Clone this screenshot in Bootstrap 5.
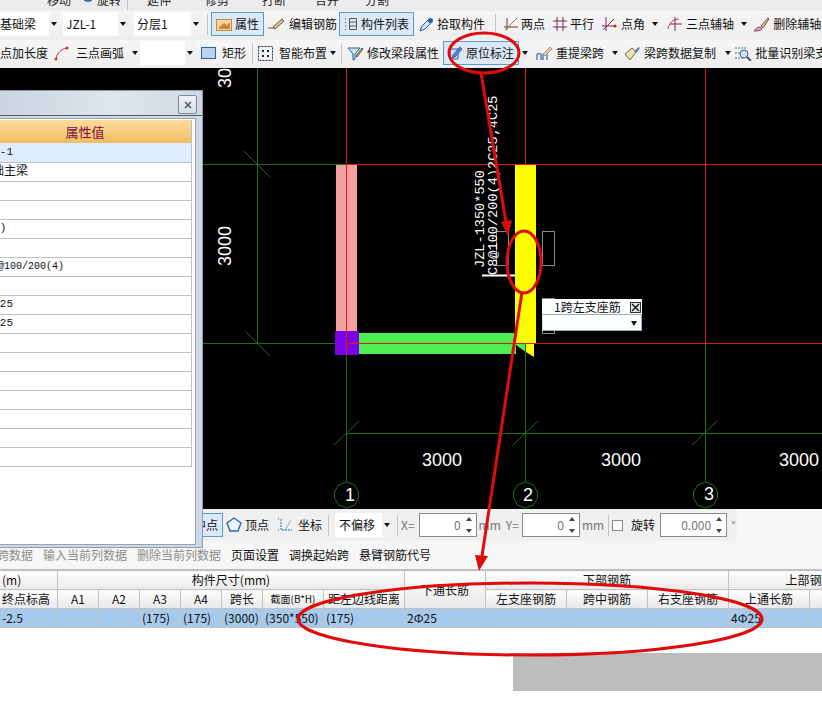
<!DOCTYPE html>
<html lang="zh">
<head>
<meta charset="utf-8">
<title>梁原位标注</title>
<link href="https://cdn.jsdelivr.net/npm/bootstrap@5.3.0/dist/css/bootstrap.min.css" rel="stylesheet">
<style>
body{margin:0;background:#fff;overflow:hidden;font-family:"Noto Sans CJK SC","Liberation Sans",sans-serif;font-size:12px;color:#111}
.app{position:relative;width:822px;height:714px;overflow:hidden;background:#fff}
.strip-top{height:11px;background:#ececec;overflow:hidden;white-space:nowrap;color:#222}
.strip-top>div{margin-top:-10px;height:20px;padding-left:47px}
.strip-top .vsep{height:20px}
.g6{margin-left:6px}.g19{margin-left:19px}.g11{margin-left:11px}.g3r{margin-right:3px}.g34{margin-left:34px}.g33{margin-left:33px}.g29{margin-left:29px}.g26{margin-left:26px}
.tbar{background:linear-gradient(#f6f6f6,#ededed);white-space:nowrap;line-height:1}
.tb1{height:29px;padding-bottom:3px}
.tb2{height:28px;padding-bottom:2px}
.itm{display:flex;align-items:center;gap:3px;height:24px;flex:none}
.itm svg{flex:none}
.on{background:#dbe9f7;border:1px solid #5b9bd5}
.pick{background:#fff;height:24px;display:flex;align-items:center;flex:none;padding-left:3px;position:relative}
.pick::after{content:"";position:absolute;right:0;top:0;bottom:0;width:11px;background:#f1f1f1}
.pick i{position:absolute;right:3px;top:10px;width:0;height:0;border:3px solid transparent;border-top:4px solid #111;border-bottom:0;z-index:1}
.tri{width:0;height:0;border:3px solid transparent;border-top:4px solid #111;border-bottom:0;flex:none}
.vsep{width:1px;height:21px;background:#c4c4c4;flex:none}
.p1{width:60px;padding-left:0}.p2{width:66px;margin-left:3px}.p3{width:68px;margin-left:5px}.p4{width:56px;margin-left:2px}.p5{width:58px}
.m6{margin-left:6px}.m3{margin-left:3px}.m4{margin-left:4px}.m5{margin-left:5px}.m8{margin-left:8px}.m10{margin-left:10px}.m2{margin-left:2px}.m1{margin-left:1px}
.canvas-wrap{height:441px;background:#000}
.canvas-wrap svg{display:block}
.bar3{height:32px;background:#f0f0f0;white-space:nowrap;color:#111;padding-left:186px;width:737px}
.bar3-outer{background:#f7f7f7;height:32px}
.spin{width:58px;height:24px;border:1px solid #8a8a8a;background:#fff;display:flex;align-items:center;justify-content:flex-end;color:#777;padding-right:15px;position:relative;flex:none}
.spin.wide{width:67px}
.spin::before,.spin::after{content:"";position:absolute;right:4px;border:3px solid transparent}
.spin::before{top:3px;border-bottom:4px solid #444;border-top:0}
.spin::after{bottom:3px;border-top:4px solid #444;border-bottom:0}
.dim{color:#777}
.menu-row{height:29px;background:#f6f6f6;white-space:nowrap;border-bottom:1px solid #bdbdbd;padding-top:5px;gap:10px;color:#111}
.menu-row .dim{color:#8d8d8d}
.menu-row .first{margin-left:-15px}
.grid-wrap{overflow:hidden;width:822px}
table.sheet{table-layout:fixed;width:891px;margin:0 0 0 -1px;border-collapse:collapse;font-size:12px;line-height:1}
table.sheet th,table.sheet td{border:1px solid #c2c2c2;padding:0 2px;font-weight:400;text-align:center;vertical-align:middle;white-space:nowrap;overflow:hidden}
table.sheet th{background:linear-gradient(#fdfdfd,#e9e9e9);height:19px;color:#111}
table.sheet th.lead-col{text-align:left}
table.sheet td{background:#a6c9ec;height:19px;color:#111;text-align:left;box-shadow:none}
.c0{width:58px}.c1{width:41px}.c2{width:61px}.c3{width:81px}
.small-h{font-size:10px}
.grey-block{margin:25px 0 0 513px;height:38px;background:#bdbdbd}
.dlg{position:absolute;left:-22px;top:90px;width:225px;height:458px;background:#cdd9e5;border:1px solid #8e9cab;z-index:3}
.dlg-title{height:25px;background:linear-gradient(90deg,#c6d2de,#dfe5ec 60%,#cfd8e2);border-bottom:1px solid #5c5c5c;position:relative}
.dlg-close{position:absolute;right:5px;top:4px;width:19px;height:19px;border:1px solid #7d8a98;background:linear-gradient(#eef2f6,#d5dde5);display:flex;align-items:center;justify-content:center;border-radius:2px}
.dlg-body{background:#fff;margin:2px 6px 0 0;height:427px;border:1px solid #9aa4ae;padding:1px 3px 0 0;border-left:0}
table.props{table-layout:fixed;width:100%;margin:0;border-collapse:collapse;font-size:12px;line-height:1}
table.props th{height:23px;background:linear-gradient(#fbdc9c,#f1bd62);color:#7c0a3c;font-weight:400;font-size:13px;text-align:center;border:0;border-right:1px solid #c0c0c0;padding:0;vertical-align:middle}
table.props td{height:19px;border:0;border-bottom:1px solid #c0c0c0;border-right:1px solid #c0c0c0;padding:0 0 0 1px;font-family:"Liberation Mono","Noto Sans CJK SC",monospace;font-size:11px;color:#111;white-space:nowrap;overflow:hidden;vertical-align:middle}
table.props td.cjk{font-size:12px}
table.props td.tight{font-size:10px}
table.props tr.sel td{background:#deedfb}
.popup{position:absolute;left:542px;top:299px;width:100px;height:32px;background:#fff;z-index:2;font-size:12px;line-height:1}
.popup-h{height:15px;display:flex;align-items:center;padding-left:12px;position:relative;white-space:nowrap}
.popup-x{position:absolute;right:1px;top:3px;width:11px;height:11px;border:1px solid #333;background:#e6e6e6;display:flex;align-items:center;justify-content:center}
.popup-s{height:17px;border:1px solid #8fb0cc;border-left-color:#ddd;position:relative}
.popup-s i{position:absolute;right:4px;top:6px;width:0;height:0;border:3px solid transparent;border-top:5px solid #111;border-bottom:0}
.marks{position:absolute;left:0;top:0;z-index:5;pointer-events:none}
</style>
</head>
<body>
<div class="app">

  <div class="strip-top"><div class="d-flex align-items-center">
    <span>移动</span>
    <svg class="g11 g3r" width="12" height="20" viewBox="0 0 12 20"><circle cx="6" cy="6" r="6" fill="#3b6cb0"/></svg>
    <span>旋转</span>
    <span class="vsep g6"></span>
    <span class="g19">延伸</span><span class="g34">修剪</span><span class="g33">打断</span><span class="g29">合并</span><span class="g26">分割</span>
  </div></div>

  <div class="tbar tb1 d-flex align-items-center">
    <div class="pick p1">基础梁<i></i></div>
    <div class="pick p2">JZL-1<i></i></div>
    <div class="pick p3">分层1<i></i></div>
    <div class="vsep m5"></div>
    <div class="itm on m3 px-1">
      <svg width="16" height="14" viewBox="0 0 16 14"><rect x=".5" y="2.500" width="15" height="11" fill="#f5d9a0" stroke="#c98a3a"/><path d="M3 10l5-4 3 2 3-3v7H3z" fill="#c98a3a"/></svg>属性</div>
    <div class="itm m3"><svg width="19" height="14" viewBox="0 0 19 14"><path d="M1 11h6M6 10l9-8 2 2-9 8z" fill="#e8c77c" stroke="#555"/></svg>编辑钢筋</div>
    <div class="itm on m2 px-1"><svg width="14" height="14" viewBox="0 0 14 14"><g fill="none" stroke="#555"><path d="M5.500 1.500h7v11h-7z"/><path d="M5.500 5h7M5.500 9h7"/><path d="M1 2h2M1 5.500h2M1 9h2M1 12.500h2" stroke-dasharray="1 1"/></g></svg>构件列表</div>
    <div class="itm m5"><svg width="15" height="15" viewBox="0 0 15 15"><path d="M1 14l2-5 6-6 3 3-6 6z" fill="#cfe3f6" stroke="#2b5f96"/><circle cx="11.500" cy="3.500" r="2.500" fill="#2b5f96"/></svg>拾取构件</div>
    <div class="vsep m10"></div>
    <div class="itm m8"><svg width="14" height="14" viewBox="0 0 14 14"><g stroke="#7a2a3a" fill="none"><path d="M3 1v12M0 10h14"/><path d="M1 13L13 1" stroke="#7a8a3a"/></g></svg>两点</div>
    <div class="itm m8"><svg width="14" height="14" viewBox="0 0 14 14"><g stroke="#7a2a5a" fill="none"><path d="M4 0v14M10 0v14M0 4h14M0 10h14"/></g></svg>平行</div>
    <div class="itm m8"><svg width="16" height="14" viewBox="0 0 16 14"><g stroke="#7a2a5a" fill="none"><path d="M4 0v14M0 9h14M1 13L12 2"/></g><circle cx="13" cy="9" r="1.500" fill="#c22"/></svg>点角<span class="tri m4"></span></div>
    <div class="itm m8"><svg width="17" height="14" viewBox="0 0 17 14"><g fill="none" stroke="#c33"><path d="M2 12C3 6 7 2 13 2"/><path d="M9 0v14M4 7h12" stroke="#7a2a5a"/></g></svg>三点辅轴<span class="tri m4"></span></div>
    <div class="itm m6"><svg width="17" height="15" viewBox="0 0 17 15"><path d="M1 14c2-3 4-4 6-4l2 2c-2 2-5 2-8 2z" fill="#d9a0d0" stroke="#944"/><path d="M8 9l7-8 1 1-6 9z" fill="#e6c86a" stroke="#555"/></svg>删除辅轴</div>
  </div>

  <div class="tbar tb2 d-flex align-items-center">
    <div class="itm">点加长度</div>
    <div class="itm m6"><svg width="16" height="15" viewBox="0 0 16 15"><path d="M2 13C3 7 7 3 13 2" fill="none" stroke="#8a4a3a"/><circle cx="2" cy="13" r="1.500" fill="#c33"/><circle cx="13" cy="2" r="1.500" fill="#c33"/></svg><span class="m3">三点画弧</span><span class="tri m5"></span></div>
    <div class="pick p4"><i></i></div>
    <div class="itm m5"><svg width="15" height="12" viewBox="0 0 15 12"><rect x=".5" y=".5" width="14" height="11" fill="#bcd2f2" stroke="#2f5fa8"/></svg><span class="m3">矩形</span></div>
    <div class="vsep m6"></div>
    <div class="itm m5"><svg width="15" height="15" viewBox="0 0 15 15"><rect x=".5" y=".5" width="14" height="14" fill="#eef2f7" stroke="#334" stroke-dasharray="2 1"/><path d="M4 4h2v2H4zM9 4h2v2H9zM4 9h2v2H4zM9 9h2v2H9z" fill="#223"/></svg><span class="m3">智能布置</span><span class="tri"></span></div>
    <div class="vsep m5"></div>
    <div class="itm m5"><svg width="17" height="15" viewBox="0 0 17 15"><path d="M1 2h12L8 8v5L6 14V8z" fill="#cfe3f6" stroke="#2b6a8a"/><path d="M9 10l6-8 1 1-6 8z" fill="#e8c77c" stroke="#555"/></svg>修改梁段属性</div>
    <div class="itm on m4 pe-1 ps-1"><svg width="15" height="15" viewBox="0 0 15 15"><path d="M2 3h8v10H2z" fill="#cfe0f4" stroke="#2f5fa8"/><path d="M5 9l7-8 2 2-7 8-3 1z" fill="#5b88c8" stroke="#2f5fa8"/></svg>原位标注</div>
    <span class="tri m3"></span>
    <div class="itm m8"><svg width="17" height="15" viewBox="0 0 17 15"><path d="M1 14V9c0-2 4-2 4 0v5M7 14V9c0-2 4-2 4 0v5" fill="none" stroke="#5a85b8" stroke-width="1.500"/><path d="M7 8l7-7 2 2-7 7z" fill="#e8c99a" stroke="#a98"/></svg>重提梁跨<span class="tri m5"></span></div>
    <div class="itm m6"><svg width="17" height="15" viewBox="0 0 17 15"><path d="M1 8l7-6 4 4-6 8z" fill="#f0e3a8" stroke="#666"/><path d="M10 5l5-4 1 1-4 5z" fill="#5a7a9a"/></svg>梁跨数据复制<span class="tri m6"></span></div>
    <div class="itm m3"><svg width="18" height="15" viewBox="0 0 18 15"><path d="M1 2h12M1 7h8M1 12h8" stroke="#2b7a9a" stroke-dasharray="2 1" fill="none"/><circle cx="10" cy="8" r="4" fill="#cfe3f6" stroke="#557"/><path d="M13 11l4 4" stroke="#557" stroke-width="2"/></svg>批量识别梁支座</div>
  </div>

  <div class="canvas-wrap">
    <svg width="822" height="441" viewBox="0 68 822 441" fill="none">
      <g stroke="#1a6e1a">
        <path d="M203 164.500H346M203 343.500H346M257.500 68V344M346.500 343V482M525.500 343V482M705.500 343V482M346 433.500H822"/>
        <path d="M244 151L270 177M245 331L270 356M334 445L359 421M513 445L538 421M692 445L717 421"/>
        <path d="M346.500 482l8 3 4 7 0 6-4 7-8 3-8-3-4-7 0-6 4-7z"/>
        <path d="M525.500 482l8 3 4 7 0 6-4 7-8 3-8-3-4-7 0-6 4-7z"/>
        <path d="M705.500 482l8 3 4 7 0 6-4 7-8 3-8-3-4-7 0-6 4-7z"/>
      </g>
      <rect x="336" y="165" width="21" height="166" fill="#f4a0a0"/>
      <rect x="359" y="333" width="157" height="21" fill="#4fef4f"/>
      <path d="M515 164h21v179h-2v14l-8-5-11-8z" fill="#ffff00"/>
      <path d="M515 344l11 8v-8z" fill="#4fef4f"/>
      <rect x="335" y="331" width="24" height="24" fill="#7a00e6"/>
      <g stroke="#d81c1c">
        <path d="M346.500 68V355M525.500 68V164M705.500 68V343"/>
        <path d="M346 164.500H822M346 343.500H822"/>
      </g>
      <path d="M525.500 343V357" stroke="#1a6e1a"/>
      <g stroke="#8a8a8a">
        <rect x="496.500" y="231.500" width="12" height="34"/>
        <rect x="542.500" y="231.500" width="12" height="34"/>
        <rect x="542.500" y="298.500" width="12" height="35"/>
      </g>
      <path d="M482 275.500H515" stroke="#fff" stroke-width="2"/>
      <g fill="#fff" font-size="18" font-family="'Liberation Sans',sans-serif">
        <text x="422" y="466">3000</text>
        <text x="601" y="466">3000</text>
        <text x="779" y="466">3000</text>
        <text transform="translate(231,266) rotate(-90)">3000</text>
        <text transform="translate(231,88) rotate(-90)">30</text>
        <text x="345" y="501">1</text>
        <text x="523" y="501">2</text>
        <text x="704" y="500">3</text>
      </g>
      <g fill="#fff" font-family="'Liberation Mono',monospace" font-size="13.600">
        <text transform="translate(484,268) rotate(-90)">JZL-1350*550</text>
        <text transform="translate(497,275) rotate(-90)">C8@100/200(4)2C25;4C25</text>
      </g>
    </svg>
  </div>

  <div class="bar3-outer">
    <div class="bar3 d-flex align-items-center">
      <div class="itm on ps-1 pe-1 m3">中点</div>
      <div class="itm m3"><svg width="16" height="16" viewBox="0 0 16 16"><path d="M8 1l7 5-3 8H4L1 6z" fill="#eef5fc" stroke="#2b6aa8" stroke-width="1.400"/></svg>顶点</div>
      <div class="itm m8"><svg width="18" height="16" viewBox="0 0 18 16"><path d="M4 2v11h11" fill="none" stroke="#2b6aa8" stroke-dasharray="2 1"/><path d="M1 2h2M1 13h2M8 13l6-10" stroke="#2b6aa8" stroke-dasharray="1 1"/></svg>坐标</div>
      <div class="vsep m6"></div>
      <div class="pick m6 p5 ps-1">不偏移<i></i></div>
      <div class="vsep m4"></div>
      <span class="dim m3">X=</span>
      <div class="spin m4">0</div>
      <span class="dim m2">mm</span>
      <span class="dim m5">Y=</span>
      <div class="spin m3">0</div>
      <span class="dim m2">mm</span>
      <div class="vsep m4"></div>
      <svg class="m3" width="11" height="11" viewBox="0 0 11 11"><rect x=".5" y=".5" width="10" height="10" fill="#fff" stroke="#888"/></svg>
      <span class="m8">旋转</span>
      <div class="spin wide m5">0.000</div>
      <span class="dim m4">°</span>
    </div>
  </div>

  <div class="menu-row d-flex">
    <span class="dim first">梁跨数据</span><span class="dim">输入当前列数据</span><span class="dim">删除当前列数据</span><span>页面设置</span><span>调换起始跨</span><span>悬臂钢筋代号</span>
  </div>

  <div class="grid-wrap">
    <table class="table sheet">
      <colgroup>
        <col class="c0"><col class="c1"><col class="c1"><col class="c1"><col class="c1"><col class="c1"><col class="c2"><col class="c3"><col class="c3"><col class="c3"><col class="c3"><col class="c3"><col class="c3"><col class="c3">
      </colgroup>
      <thead>
        <tr><th class="lead-col">(m)</th><th colspan="7">构件尺寸(mm)</th><th rowspan="2">下通长筋</th><th colspan="3">下部钢筋</th><th colspan="2">上部钢筋</th></tr>
        <tr><th class="lead-col">终点标高</th><th>A1</th><th>A2</th><th>A3</th><th>A4</th><th>跨长</th><th class="small-h">截面(B*H)</th><th>距左边线距离</th><th>左支座钢筋</th><th>跨中钢筋</th><th>右支座钢筋</th><th>上通长筋</th><th></th></tr>
      </thead>
      <tbody>
        <tr><td>-2.5</td><td></td><td></td><td>(175)</td><td>(175)</td><td>(3000)</td><td>(350*550)</td><td>(175)</td><td>2Ф25</td><td></td><td></td><td></td><td>4Ф25</td><td></td></tr>
      </tbody>
    </table>
  </div>
  <div class="grey-block"></div>

  <div class="popup">
    <div class="popup-h">1跨左支座筋<span class="popup-x"><svg width="9" height="9" viewBox="0 0 9 9"><path d="M1 1l7 7M8 1L1 8" stroke="#111" stroke-width="1.400"/></svg></span></div>
    <div class="popup-s"><i></i></div>
  </div>

  <div class="dlg">
    <div class="dlg-title"><span class="dlg-close"><svg width="8" height="8" viewBox="0 0 8 8"><path d="M1 1l6 6M7 1L1 7" stroke="#555" stroke-width="1.500"/></svg></span></div>
    <div class="dlg-body">
      <table class="table props">
        <thead><tr><th>属性值</th></tr></thead>
        <tbody>
          <tr class="sel"><td>JZL-1</td></tr>
          <tr><td class="cjk">基础主梁</td></tr>
          <tr><td></td></tr>
          <tr><td></td></tr>
          <tr><td>(25)</td></tr>
          <tr><td></td></tr>
          <tr><td class="tight">&nbsp;C8@100/200(4)</td></tr>
          <tr><td></td></tr>
          <tr><td>2 Ф25</td></tr>
          <tr><td>4 Ф25</td></tr>
          <tr><td></td></tr><tr><td></td></tr><tr><td></td></tr><tr><td></td></tr><tr><td></td></tr><tr><td></td></tr><tr><td></td></tr>
        </tbody>
      </table>
    </div>
  </div>

  <svg class="marks" width="822" height="714" viewBox="0 0 822 714" fill="none">
    <g stroke="#e00b0b" stroke-width="3">
      <ellipse cx="484" cy="53" rx="35" ry="20"/>
      <ellipse cx="524" cy="262" rx="17" ry="31"/>
      <ellipse cx="530" cy="619" rx="232" ry="36"/>
      <path d="M481 73L506 222M522 292L482 556"/>
    </g>
    <path d="M508 236L501 222L512 220zM479 571L475 555L488 556z" fill="#e00b0b"/>
  </svg>
</div>
<script src="https://cdn.jsdelivr.net/npm/bootstrap@5.3.0/dist/js/bootstrap.bundle.min.js"></script>
</body>
</html>
